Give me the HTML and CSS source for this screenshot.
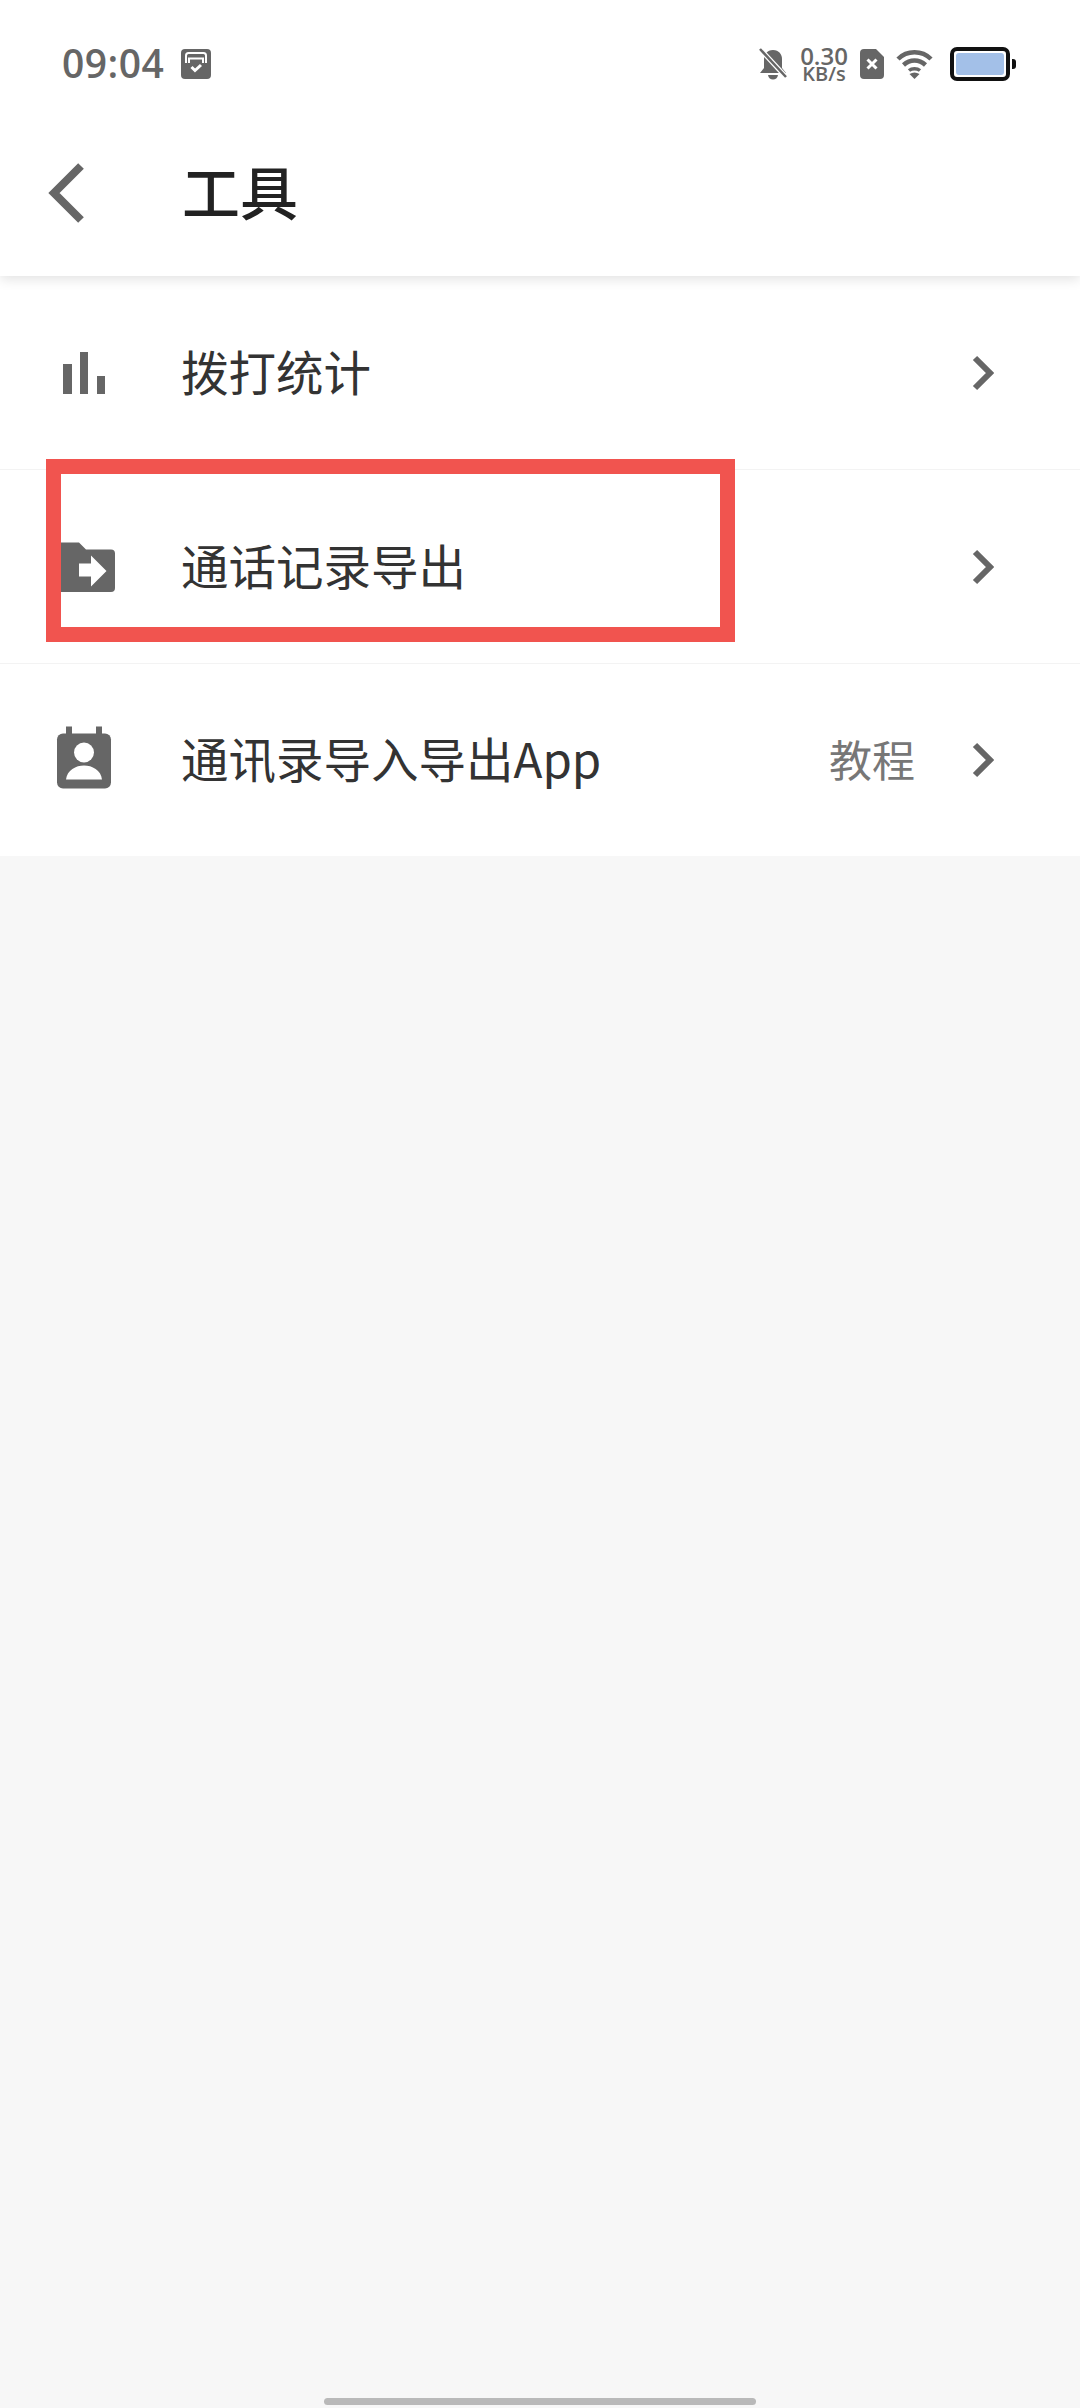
FILE: index.html
```html
<!DOCTYPE html>
<html lang="zh-CN">
<head>
    <meta charset="UTF-8">
    <meta name="viewport" content="width=device-width, initial-scale=1.0">
    <title>工具</title>
    <link rel="stylesheet" href="styles.css">
</head>
<body>

<div class="page">
    <div class="top-area">
        <div class="status-bar">
            <span class="clock">09:04</span>
            <svg class="clock-icon" width="30" height="30" viewBox="0 0 30 30">
                <rect width="30" height="30" rx="4" fill="#666"/>
                <path d="M5 14V6.500Q5 4 7.500 4H22.500Q25 4 25 6.500V14" fill="none" stroke="#fff" stroke-width="2"/>
                <path d="M8 14V9.500H22V14" fill="none" stroke="#fff" stroke-width="2"/>
                <path d="M10.500 18L14 21.500L20 16" fill="none" stroke="#fff" stroke-width="3"/>
            </svg>
            <div class="status-right">
                <svg width="28" height="32" viewBox="0 0 28 32">
                    <path d="M14 2C8 2 5 6.500 5 11V20L1 25H27L23 20V11C23 6.500 20 2 14 2Z" fill="#666"/>
                    <path d="M9 27H19C18.500 30 16.500 31.500 14 31.500C11.500 31.500 9.500 30 9 27Z" fill="#666"/>
                    <path d="M1 1L27 29" stroke="#fff" stroke-width="5"/>
                    <path d="M1 1L27 29" stroke="#666" stroke-width="2.500"/>
                </svg>
                <div class="net-speed">
                    <span class="speed-num">0.30</span>
                    <span class="speed-unit">KB/s</span>
                </div>
                <svg width="24" height="30" viewBox="0 0 24 30">
                    <path d="M4 0H16L24 8V26Q24 30 20 30H4Q0 30 0 26V4Q0 0 4 0Z" fill="#666"/>
                    <path d="M7.500 10.500L16.500 19.500M16.500 10.500L7.500 19.500" stroke="#fff" stroke-width="3"/>
                </svg>
                <svg class="wifi-icon" width="37" height="30" viewBox="0 0 37 30">
                    <path d="M2 10C11 1 26 1 35 10" fill="none" stroke="#666" stroke-width="4.500"/>
                    <path d="M7.500 16C14 10 23 10 29.500 16" fill="none" stroke="#666" stroke-width="4.500"/>
                    <path d="M13 21.500C16 19 21 19 24 21.500" fill="none" stroke="#666" stroke-width="3.500"/>
                    <path d="M13.500 25L18.500 30L23.500 25Q18.500 22 13.500 25Z" fill="#666"/>
                </svg>
                <div class="battery">
                    <div class="battery-body"><div class="battery-fill"></div></div>
                    <div class="battery-nub"></div>
                </div>
            </div>
        </div>
        <div class="title-bar">
            <svg class="back-icon" width="36" height="60" viewBox="0 0 36 60">
                <path d="M33 3L6 30L33 57" fill="none" stroke="#666" stroke-width="8"/>
            </svg>
            <h1 class="page-title">工具</h1>
        </div>
    </div>

    <div class="tool-list">
        <div class="tool-row">
            <svg class="tool-icon" width="72" height="72" viewBox="0 0 72 72">
                <rect x="15" y="27" width="9" height="30" fill="#666"/>
                <rect x="32" y="15" width="8" height="42" fill="#666"/>
                <rect x="49" y="39" width="8" height="18" fill="#666"/>
            </svg>
            <span class="tool-name">拨打统计</span>
            <svg class="arrow" width="22" height="36" viewBox="0 0 22 36">
                <path d="M3 3L18 18L3 33" fill="none" stroke="#666" stroke-width="6"/>
            </svg>
        </div>
        <div class="tool-row">
            <svg class="tool-icon" width="72" height="72" viewBox="0 0 72 72">
                <path d="M8 11.500H31L38 18.500H63Q67 18.500 67 22.500V57Q67 61 63 61H8Z" fill="#666"/>
                <path d="M31 32.500H43V24.500L58.500 40L43 55.500V45.500H31Z" fill="#fff"/>
            </svg>
            <span class="tool-name">通话记录导出</span>
            <svg class="arrow" width="22" height="36" viewBox="0 0 22 36">
                <path d="M3 3L18 18L3 33" fill="none" stroke="#666" stroke-width="6"/>
            </svg>
        </div>
        <div class="tool-row tool-row-last">
            <svg class="tool-icon" width="72" height="72" viewBox="0 0 72 72">
                <rect x="9" y="9.500" width="54" height="55" rx="6" fill="#666"/>
                <rect x="18" y="2.500" width="6" height="9" fill="#666"/>
                <rect x="48" y="2.500" width="6" height="9" fill="#666"/>
                <circle cx="36" cy="28.500" r="10" fill="#fff"/>
                <path d="M18 55.500C19 46 28 41.500 36 41.500C44 41.500 53 46 54 55.500Z" fill="#fff"/>
            </svg>
            <span class="tool-name">通讯录导入导出App</span>
            <span class="tool-hint">教程</span>
            <svg class="arrow" width="22" height="36" viewBox="0 0 22 36">
                <path d="M3 3L18 18L3 33" fill="none" stroke="#666" stroke-width="6"/>
            </svg>
        </div>
    </div>

    <!-- red box drawn on top of the second row -->
    <div class="mark-box"></div>

    <div class="home-bar"></div>
</div>

</body>
</html>
```

FILE: styles.css
```css
body {
    margin: 0;
    background-color: #f7f7f7;
    font-family: "Noto Sans CJK SC", "Noto Sans", sans-serif;
}
.page {
    position: relative;
    display: flex;
    flex-direction: column;
    height: 2408px;
    overflow: hidden;
}
.top-area {
    background-color: white;
    height: 276px;
    box-shadow: 0 3px 12px rgba(0, 0, 0, 0.12);
    position: relative;
}
.status-bar {
    display: flex;
    align-items: center;
    height: 30px;
    padding: 49px 64px 0 62px;
}
.clock {
    margin-bottom: 3px;
    font-family: "Open Sans", sans-serif;
    font-size: 39px;
    font-weight: 600;
    letter-spacing: 0.5px;
    color: #666;
}
.clock-icon {
    margin-left: 17px;
}
.status-right {
    display: flex;
    align-items: center;
    margin-left: auto;
}
.net-speed {
    display: flex;
    flex-direction: column;
    align-items: center;
    width: 48px;
    margin: 0 12px 0 13px;
    font-family: "Open Sans", sans-serif;
    font-weight: 600;
    color: #666;
}
.speed-num {
    font-size: 24px;
    line-height: 20px;
}
.speed-unit {
    font-size: 20px;
    line-height: 16px;
}
.wifi-icon {
    margin-left: 12px;
}
.battery {
    display: flex;
    align-items: center;
    margin-left: 17px;
}
.battery-body {
    width: 48px;
    height: 22px;
    padding: 2px;
    border: 4px solid #111;
    border-radius: 7px;
    background-color: white;
}
.battery-fill {
    height: 100%;
    border-radius: 3px;
    background-color: #a3c0e8;
}
.battery-nub {
    width: 4px;
    height: 10px;
    margin-left: 2px;
    background-color: #111;
    border-radius: 0 3px 3px 0;
}
.title-bar {
    display: flex;
    align-items: center;
    height: 167px;
    padding: 30px 0 0 48px;
}
.page-title {
    margin: 0 0 5px 98px;
    font-size: 58px;
    font-weight: 500;
    color: #222;
}
.tool-list {
    background-color: white;
}
.tool-row {
    display: flex;
    align-items: center;
    height: 193px;
    padding: 0 86px 0 48px;
    border-bottom: 1px solid #f3f3f3;
}
.tool-row-last {
    height: 192px;
    border-bottom: none;
}
.tool-icon {
    flex-shrink: 0;
}
.tool-name {
    margin: 0 0 5px 61px;
    font-size: 47.5px;
    color: #333;
}
.tool-hint {
    margin: 0 0 5px auto;
    font-size: 43px;
    color: #777;
}
.arrow {
    margin-left: auto;
}
.tool-hint + .arrow {
    margin-left: 57px;
}
.mark-box {
    position: absolute;
    left: 46px;
    top: 459px;
    width: 659px;
    height: 153px;
    border: 15px solid #f1544f;
}
.home-bar {
    position: absolute;
    left: 324px;
    bottom: 3px;
    width: 432px;
    height: 7px;
    border-radius: 4px;
    background-color: #b9b9b9;
}
```
